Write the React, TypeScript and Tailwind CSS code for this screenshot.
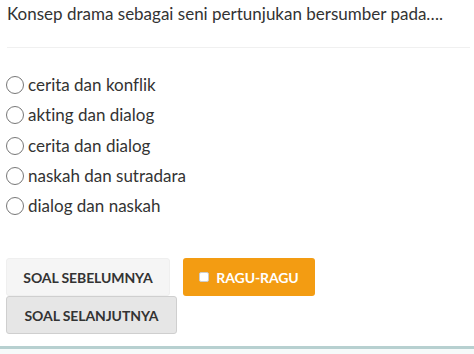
import React from 'react';

const options = ['cerita dan konflik', 'akting dan dialog', 'cerita dan dialog', 'naskah dan sutradara', 'dialog dan naskah'];

export default function App() {
  return (
    <div className="h-[354px] w-[474px] overflow-hidden bg-white font-['Lato',sans-serif] text-[#333] [font-variant-ligatures:none]">
      <div className="px-[7px] pt-[2px]">
        <p className="text-[17px] leading-[24px]">Konsep drama sebagai seni pertunjukan bersumber pada….</p>
      </div>
      <div className="ml-[7px] mr-[4px] mt-[21px] border-t border-[#f0f0f0]" />
      <div className="mt-[22px] flex flex-col px-[6px]">
        {options.map((o) => (
          <label key={o} className="flex h-[30.3px] items-center gap-[4px]">
            <span className="h-[18px] w-[18px] rounded-full border border-[#777] bg-white" />
            <span className="text-[17px] leading-[24px]">{o}</span>
          </label>
        ))}
      </div>
      <div className="mt-[37px] flex px-[6px]">
        <div className="flex w-[340px] flex-wrap items-start gap-x-[13px]">
          <button className="h-[38px] w-[164px] rounded-[3px] border border-[#efefef] bg-[#f5f5f5] text-[14px] font-bold tracking-[-0.1px] text-[#333]">
            SOAL SEBELUMNYA
          </button>
          <button className="flex h-[38px] w-[132px] items-center justify-center gap-[7px] rounded-[3px] bg-[#f39c12] text-[14px] font-bold tracking-[-0.1px] text-white">
            <span className="h-[10px] w-[10px] rounded-[2px] border border-[#ccc] bg-white" />
            RAGU-RAGU
          </button>
          <button className="h-[38px] w-[171px] rounded-[3px] border border-[#cfcfcf] bg-[#e6e6e6] text-[14px] font-bold tracking-[-0.1px] text-[#333]">
            SOAL SELANJUTNYA
          </button>
        </div>
      </div>
      <div className="mt-[12px] h-[3px] bg-[#b7d0d0]" />
      <div className="h-[10px] bg-[#f6fafa]" />
    </div>
  );
}
